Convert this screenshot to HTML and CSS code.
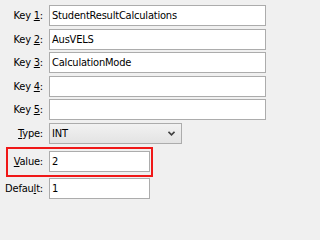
FILE: index.html
```html
<!DOCTYPE html>
<html>
<head>
<meta charset="utf-8">
<link rel="stylesheet" href="styles.css">
</head>
<body>
<div class="form">
  <div class="row"><label class="lbl">Key <u>1</u>:</label><div class="field wide">StudentResultCalculations</div></div>
  <div class="row"><label class="lbl">Key <u>2</u>:</label><div class="field wide">AusVELS</div></div>
  <div class="row"><label class="lbl">Key <u>3</u>:</label><div class="field wide">CalculationMode</div></div>
  <div class="row"><label class="lbl">Key <u>4</u>:</label><div class="field wide"></div></div>
  <div class="row"><label class="lbl">Key <u>5</u>:</label><div class="field wide"></div></div>
  <div class="row"><label class="lbl"><u>T</u>ype:</label><div class="combo"><span>INT</span><svg class="chev" width="7" height="5" viewBox="0 0 7 5"><path d="M0.5 0.8 L3.5 3.8 L6.5 0.8" fill="none" stroke="#404040" stroke-width="1.6"/></svg></div></div>
  <div class="hl">
    <div class="row inner"><label class="lbl small"><u>V</u>alue:</label><div class="field narrow">2</div></div>
  </div>
  <div class="row last"><label class="lbl">Defau<u>l</u>t:</label><div class="field narrow">1</div></div>
</div>
</body>
</html>
```

FILE: styles.css
```css
html, body {
  margin: 0;
  padding: 0;
  background: #f0f0f0;
}
body {
  font-family: "DejaVu Sans Condensed", "DejaVu Sans", sans-serif;
  font-stretch: condensed;
  font-size: 11px;
  letter-spacing: -0.2px;
  color: #000;
}
.form {
  display: flex;
  flex-direction: column;
  padding-top: 5px;
  width: 271px;
}
.row {
  display: flex;
  align-items: center;
  height: 21px;
  margin-bottom: 2.5px;
}
.lbl {
  box-sizing: border-box;
  width: 49px;
  padding-right: 6px;
  text-align: right;
  white-space: nowrap;
}
.lbl u {
  text-decoration: underline;
  text-underline-offset: 1px;
}
.field {
  box-sizing: border-box;
  height: 21px;
  border: 1px solid #acacac;
  background: #fff;
  padding: 0 2px;
  line-height: 19px;
  white-space: nowrap;
  overflow: hidden;
}
.wide { width: 217px; }
.narrow { width: 101px; }
.combo {
  box-sizing: border-box;
  width: 133px;
  height: 21px;
  border: 1px solid #acacac;
  background: linear-gradient(#f2f2f2, #e3e3e3);
  padding: 0 6px 0 2px;
  display: flex;
  align-items: center;
  justify-content: space-between;
}
.hl {
  box-sizing: border-box;
  margin-left: 6px;
  margin-top: 0.5px;
  width: 147px;
  height: 30px;
  border: 2px solid #f01818;
  padding-top: 2px;
  margin-bottom: 1px;
}
.row.inner {
  margin: 0;
}
.lbl.small {
  width: 41px;
}
```
